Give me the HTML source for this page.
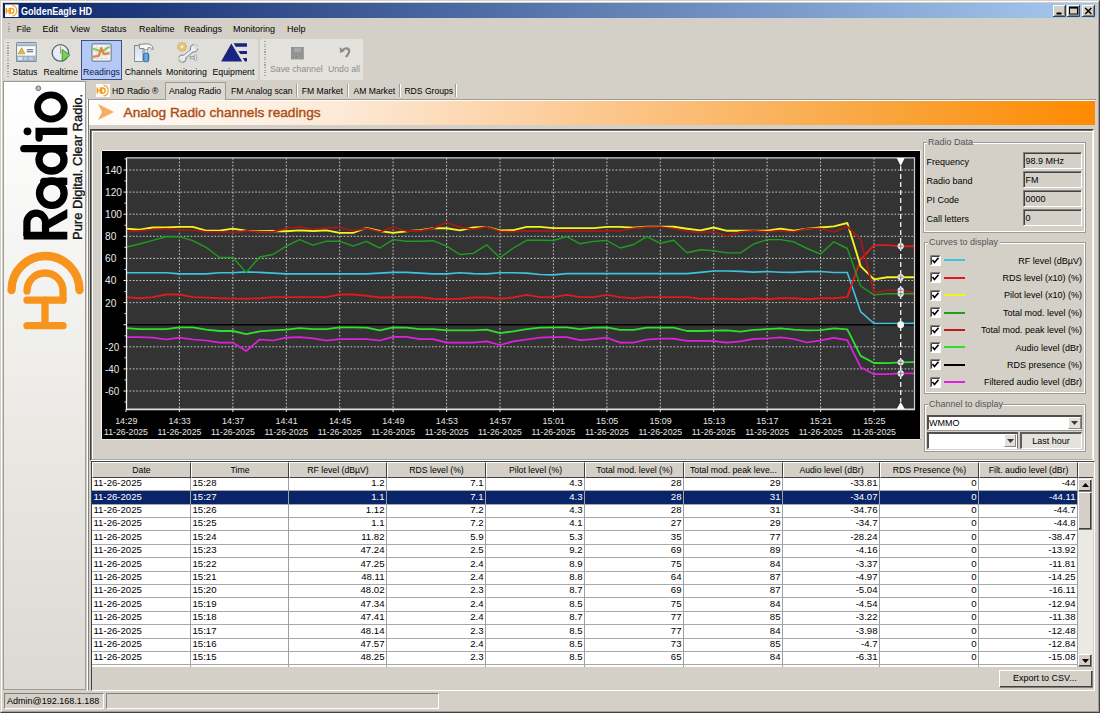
<!DOCTYPE html><html><head><meta charset="utf-8"><style>
*{box-sizing:border-box;margin:0;padding:0}
html,body{width:1100px;height:713px;overflow:hidden}
body{position:relative;background:#d4d0c8;font-family:"Liberation Sans",sans-serif;font-size:9px;color:#000}
.a{position:absolute}
.t{position:absolute;white-space:nowrap;line-height:1}
.raised{border-style:solid;border-width:1px;border-color:#fff #808080 #808080 #fff}
.sunk{border-style:solid;border-width:1px;border-color:#808080 #fff #fff #808080}
.grp{position:absolute;border:1px solid #fff;box-shadow:inset 1px 1px 0 #9c9a94, -1px -1px 0 #9c9a94}
.cell{position:absolute;white-space:nowrap;overflow:hidden;line-height:13px;height:13px}
</style></head><body>
<div class="a" style="left:0;top:0;width:1100px;height:713px;border-style:solid;border-width:1px;border-color:#d4d0c8 #404040 #404040 #d4d0c8"></div>
<div class="a" style="left:1px;top:1px;width:1098px;height:711px;border-style:solid;border-width:1px;border-color:#fff #a4a19a #a4a19a #fff"></div>
<div class="a" style="left:3px;top:3px;width:1094px;height:15px;background:linear-gradient(90deg,#0a246a 0%,#a6caf0 100%)"></div>
<svg class="a" style="left:5px;top:4px" width="13.5" height="13.5" viewBox="0 0 14 13"><rect width="14" height="13" fill="#fdfcfa"/><path d="M1.3,3.6 V9.6 M4.5,3.6 V9.6 M1.3,6.6 H4.5" stroke="#f29c1e" stroke-width="1.5" fill="none"/><path d="M5.6,3.3 V9.9 M5.6,4 H6.6 A2.6,2.6 0 0 1 6.6,9.2 H5.6" stroke="#f29c1e" stroke-width="1.4" fill="none"/><path d="M7.4,1.1 A5.5,5.5 0 0 1 7.4,12" stroke="#f4a62e" stroke-width="1.2" fill="none"/></svg>
<div class="t" style="left:20.5px;top:6.6px;font-size:10.2px;color:#fff;font-weight:bold;transform:scaleX(0.89);transform-origin:0 0">GoldenEagle HD</div>
<svg class="a" style="left:1053px;top:5px" width="13" height="12" viewBox="0 0 13 12"><rect x="0" y="0" width="13" height="12" fill="#d4d0c8"/><path d="M0.5,11.5 V0.5 H12.5" stroke="#fff" fill="none"/><path d="M0,11.5 H12.5 V0" stroke="#404040" fill="none"/><path d="M1.5,10.5 H11.5 V1" stroke="#808080" fill="none"/><rect x="3.5" y="7.5" width="5" height="2" fill="#000"/></svg>
<svg class="a" style="left:1067px;top:5px" width="13" height="12" viewBox="0 0 13 12"><rect x="0" y="0" width="13" height="12" fill="#d4d0c8"/><path d="M0.5,11.5 V0.5 H12.5" stroke="#fff" fill="none"/><path d="M0,11.5 H12.5 V0" stroke="#404040" fill="none"/><path d="M1.5,10.5 H11.5 V1" stroke="#808080" fill="none"/><rect x="2.5" y="2" width="8" height="7" fill="none" stroke="#000" stroke-width="1"/><rect x="2.5" y="2" width="8" height="1.6" fill="#000"/></svg>
<svg class="a" style="left:1082px;top:5px" width="13" height="12" viewBox="0 0 13 12"><rect x="0" y="0" width="13" height="12" fill="#d4d0c8"/><path d="M0.5,11.5 V0.5 H12.5" stroke="#fff" fill="none"/><path d="M0,11.5 H12.5 V0" stroke="#404040" fill="none"/><path d="M1.5,10.5 H11.5 V1" stroke="#808080" fill="none"/><path d="M3.3,3 L9.3,9 M9.3,3 L3.3,9" stroke="#000" stroke-width="1.5"/></svg>
<div class="a" style="left:8px;top:23px;width:2px;height:10px;background:repeating-linear-gradient(180deg,#a8a49c 0 1.3px,transparent 1.3px 2.6px)"></div>
<div class="t" style="left:16.5px;top:25.3px;font-size:9px;color:#000;">File</div>
<div class="t" style="left:42.5px;top:25.3px;font-size:9px;color:#000;">Edit</div>
<div class="t" style="left:70.5px;top:25.3px;font-size:9px;color:#000;">View</div>
<div class="t" style="left:101px;top:25.3px;font-size:9px;color:#000;">Status</div>
<div class="t" style="left:139px;top:25.3px;font-size:9px;color:#000;">Realtime</div>
<div class="t" style="left:184px;top:25.3px;font-size:9px;color:#000;">Readings</div>
<div class="t" style="left:233px;top:25.3px;font-size:9px;color:#000;">Monitoring</div>
<div class="t" style="left:287px;top:25.3px;font-size:9px;color:#000;">Help</div>
<div class="a" style="left:4px;top:39px;width:254px;height:41px;background:#e0ded8;border-radius:2px"></div>
<div class="a" style="left:260px;top:39px;width:103px;height:41px;background:#e4e2dc;border-radius:2px"></div>
<div class="a" style="left:7px;top:42px;width:2px;height:35px;background:repeating-linear-gradient(180deg,#a8a49c 0 1.3px,transparent 1.3px 2.6px)"></div>
<div class="a" style="left:264px;top:41px;width:2px;height:36px;background:repeating-linear-gradient(180deg,#a8a49c 0 1.3px,transparent 1.3px 2.6px)"></div>
<div class="a" style="left:81px;top:40px;width:41px;height:40px;background:#b6c8f4;border:1px solid #3d4f8f"></div>
<svg class="a" style="left:15.5px;top:42px" width="21" height="20" viewBox="0 0 21 20"><defs><linearGradient id="sb" x1="0" y1="0" x2="0" y2="1"><stop offset="0" stop-color="#c2d0de"/><stop offset="1" stop-color="#94a8bc"/></linearGradient></defs><rect x="0.6" y="0.6" width="19.6" height="19" rx="1" fill="#fbfcfd" stroke="#7d8c9c" stroke-width="1.1"/><rect x="1.1" y="1.1" width="18.6" height="3.1" fill="url(#sb)"/><rect x="1.1" y="13.6" width="18.6" height="5.5" fill="#9fb2c6"/><rect x="2" y="15" width="4.5" height="3" fill="#d8e6f4"/><rect x="8" y="15.5" width="3" height="2" fill="#c8d8e8"/><rect x="13" y="15.5" width="4" height="2" fill="#c8d8e8"/><path d="M5.6,5.8 L9,11.8 H2.2 Z" fill="#dcbc4c" stroke="#c8a030" stroke-width="0.9" stroke-linejoin="round"/><rect x="10.8" y="7.1" width="6.3" height="1.2" fill="#6c747c"/><rect x="10.8" y="9.1" width="6.3" height="1.2" fill="#6c747c"/></svg>
<svg class="a" style="left:51px;top:44px" width="20" height="19" viewBox="0 0 20 19"><circle cx="9.4" cy="8.9" r="8.2" fill="#e2eef8" stroke="#5a6670" stroke-width="1.3"/><path d="M9.1,2.4 L9.9,2.4 L10,9.5 L9,9.5 Z" fill="#d07a38"/><path d="M11.2,5.4 L18.9,11.3 L11.2,17.5 Z" fill="#7cd05a" stroke="#3a8a2a" stroke-width="0.9" stroke-linejoin="round"/></svg>
<svg class="a" style="left:91px;top:43px" width="21" height="19" viewBox="0 0 21 19"><rect x="0.9" y="0.8" width="19.4" height="17.4" rx="2" fill="#f2f4f6" stroke="#8494ac" stroke-width="1.5"/><path d="M2,5 H19 M2,8.5 H19 M2,12 H19 M2,15.5 H19 M6,2 V17 M10.5,2 V17 M15,2 V17" stroke="#cdd6e2" stroke-width="0.6"/><path d="M1.7,5.8 L11.2,8.4 L18.6,3.6" stroke="#8cc45a" stroke-width="2" fill="none" stroke-linejoin="round"/><path d="M1.7,13.8 L7.8,12.8 L10.2,5.1 L12.8,11.1 L18.6,10.1" stroke="#e0883a" stroke-width="2.3" fill="none" stroke-linejoin="round"/></svg>
<svg class="a" style="left:133px;top:43px" width="22" height="20" viewBox="0 0 22 20"><defs><linearGradient id="dg" x1="0" y1="0" x2="0" y2="1"><stop offset="0" stop-color="#d2deec"/><stop offset="1" stop-color="#f2f6fb"/></linearGradient><linearGradient id="hg" x1="0" y1="0" x2="1" y2="0"><stop offset="0" stop-color="#3c84c4"/><stop offset="0.5" stop-color="#7ab4e4"/><stop offset="1" stop-color="#3a7ab8"/></linearGradient></defs><rect x="1.6" y="2.5" width="8.4" height="16" fill="url(#dg)" stroke="#77828e" stroke-width="0.9"/><path d="M6.2,1.4 L13.5,0.9 C17.5,0.9 20,2.8 20.2,6.3 L18.8,6.6 C18,4.8 16.8,4.2 15.2,4.6 L14.6,7 L11.4,7 L10.8,5.4 L6.6,5.6 Z" fill="#f6f8fa" stroke="#707a84" stroke-width="0.9" stroke-linejoin="round"/><rect x="11.4" y="6.8" width="3.2" height="3.6" fill="#e0e4e8" stroke="#8a949c" stroke-width="0.6"/><rect x="10.4" y="10.1" width="5.4" height="8.7" rx="1.8" fill="url(#hg)" stroke="#2a6898" stroke-width="0.8"/></svg>
<svg class="a" style="left:175px;top:41px" width="24" height="22" viewBox="0 0 24 22"><circle cx="7" cy="5.8" r="4.3" fill="#e2c27a" stroke="#d6b062" stroke-width="1.2" stroke-dasharray="1.8 0.9"/><circle cx="7" cy="5.8" r="3.2" fill="#e4c47c"/><circle cx="7" cy="5.8" r="1.4" fill="#fbf0d8"/><path d="M8.2,16.8 L18.3,8.6" stroke="#8a9298" stroke-width="4.2" stroke-linecap="round"/><circle cx="19" cy="7.4" r="3.6" fill="#eef0f2" stroke="#7a8288" stroke-width="1.1"/><circle cx="7.4" cy="17.6" r="3.6" fill="#eef0f2" stroke="#7a8288" stroke-width="1.1"/><path d="M8.2,16.8 L18.3,8.6" stroke="#eef0f2" stroke-width="2.4" stroke-linecap="round"/><path d="M19.2,2.4 L24,6.8 L20.6,8.8 L18.4,6.8 Z" fill="#e2e0da"/><path d="M2.4,17 L6.8,21.8 L8.2,18.2 L6.2,16.4 Z" fill="#e2e0da"/><rect x="15.2" y="15.4" width="4.4" height="2.4" fill="#dfe2e5" stroke="#8a9298" stroke-width="0.8"/><rect x="19.4" y="14.2" width="2.2" height="5.2" rx="1" fill="#eef0f2" stroke="#8a9298" stroke-width="0.8"/></svg>
<svg class="a" style="left:220px;top:43px" width="28" height="20" viewBox="0 0 28 20"><path d="M1.1,18.4 L11.3,0.4 L22.2,18.4 Z" fill="#1a2282"/><path d="M13.6,0.2 H27 V3.7 H15.7 Z" fill="#1a2282"/><path d="M18.4,7.9 H27 V10.9 H20.3 Z" fill="#1a2282"/><path d="M22.8,15 H27 V18.5 H24.9 Z" fill="#1a2282"/></svg>
<svg class="a" style="left:291px;top:46.5px" width="13" height="13" viewBox="0 0 13 13"><rect x="0" y="0" width="12.8" height="12.4" fill="#919191"/><rect x="3" y="0.6" width="7" height="4.6" fill="#a6a6a6"/><rect x="3.6" y="7.6" width="5.6" height="4.4" fill="#9a9a9a"/><rect x="4.6" y="8.6" width="2" height="2.4" fill="#868686"/></svg>
<svg class="a" style="left:338.5px;top:46px" width="12" height="12" viewBox="0 0 12 12"><path d="M3.6,4.4 C5.2,1.6 10.2,1.6 10.2,5.2 C10.2,7.6 8.4,8.6 7,11" stroke="#8c8c8c" stroke-width="2.3" fill="none"/><path d="M0.6,1.2 L1,7 L6,5 Z" fill="#8c8c8c"/></svg>
<div class="t" style="left:12.6px;top:67.7px;font-size:8.75px;color:#000;">Status</div>
<div class="t" style="left:43.5px;top:67.7px;font-size:8.75px;color:#000;">Realtime</div>
<div class="t" style="left:83px;top:67.7px;font-size:8.75px;color:#0a1850;">Readings</div>
<div class="t" style="left:124.8px;top:67.7px;font-size:8.75px;color:#000;">Channels</div>
<div class="t" style="left:166px;top:67.7px;font-size:8.75px;color:#000;">Monitoring</div>
<div class="t" style="left:212.5px;top:67.7px;font-size:8.75px;color:#000;">Equipment</div>
<div class="t" style="left:270px;top:64.7px;font-size:8.7px;color:#8c8c8c;">Save channel</div>
<div class="t" style="left:328px;top:64.7px;font-size:8.7px;color:#8c8c8c;">Undo all</div>
<div class="a" style="left:3px;top:81px;width:83px;height:609px;border:1px solid #a09c94;background:linear-gradient(180deg,#ffffff 0%,#f4f4f2 30%,#e6e4de 70%,#dcd9d2 100%)"></div>
<svg class="a" style="left:4px;top:82px" width="81" height="265" viewBox="4 82 81 265">
<g transform="matrix(0 -1 -1 0 67.3 240)" fill="none" stroke="#000">
<path d="M0.4,0 H8.3 V43.7 H0.4 Z" fill="#000" stroke="none"/>
<path d="M4,40.4 H17.5 A9.3,9.3 0 0 0 17.5,21.8 H4" stroke-width="7.2"/>
<path d="M11.5,18.6 H20.5 L31,0 H22 Z" fill="#000" stroke="none"/>
<ellipse cx="46.8" cy="15.5" rx="12.2" ry="12.3" stroke-width="7.3"/>
<path d="M58.7,4 V23.5" stroke-width="7.3" stroke-linecap="round"/>
<path d="M58.7,0 V8" stroke-width="7.3"/>
<ellipse cx="80.2" cy="15.8" rx="11.2" ry="12.5" stroke-width="7.3"/>
<path d="M91.4,4 V43.5" stroke-width="7.3" stroke-linecap="round"/>
<path d="M91.4,0 V8" stroke-width="7.3"/>
<path d="M108.7,4 V28.2 H102" stroke-width="7.3" stroke-linecap="round" stroke-linejoin="miter"/>
<path d="M108.7,0 V8" stroke-width="7.3"/>
<circle cx="108.7" cy="39.8" r="3.9" fill="#000" stroke="none"/>
<ellipse cx="133" cy="16.4" rx="12.1" ry="13.3" stroke-width="6.8"/>
</g>
<text transform="translate(82,240) rotate(-90)" font-family="Liberation Sans" font-size="13.3" fill="#111" stroke="#111" stroke-width="0.35" textLength="146" lengthAdjust="spacingAndGlyphs">Pure Digital. Clear Radio.</text>
<circle cx="38.3" cy="88.3" r="2.4" fill="#bbb" stroke="#666" stroke-width="0.9"/>
<path d="M11.5,290 A34,34 0 0 1 79.5,290" stroke="#f7941d" stroke-width="8.3" fill="none" stroke-linecap="round"/>
<path d="M27,291 A18,18 0 0 1 63,291 V300" stroke="#f7941d" stroke-width="7.3" fill="none" stroke-linecap="round"/>
<path d="M27,300.2 H63 M45,300 V325 M27,325.7 H63" stroke="#f7941d" stroke-width="7.3" fill="none" stroke-linecap="round"/>
</svg>
<div class="a" style="left:87px;top:81px;width:1010px;height:18px;background:#d4d0c8"></div>
<svg class="a" style="left:96px;top:84px" width="14" height="13" viewBox="0 0 14 13"><rect width="14" height="13" fill="#fdfcfa"/><path d="M1.3,3.6 V9.6 M4.5,3.6 V9.6 M1.3,6.6 H4.5" stroke="#f29c1e" stroke-width="1.5" fill="none"/><path d="M5.6,3.3 V9.9 M5.6,4 H6.6 A2.6,2.6 0 0 1 6.6,9.2 H5.6" stroke="#f29c1e" stroke-width="1.4" fill="none"/><path d="M7.4,1.1 A5.5,5.5 0 0 1 7.4,12" stroke="#f4a62e" stroke-width="1.2" fill="none"/></svg>
<div class="t" style="left:112px;top:87.2px;font-size:8.7px;color:#000;">HD Radio &#174;</div>
<div class="a" style="left:88px;top:99px;width:1008px;height:1px;background:#a09c94"></div>
<div class="a" style="left:165px;top:82px;width:61px;height:19px;background:#dcd9d2;border:1px solid #a09c94;border-bottom:none"></div>
<div class="t" style="left:169px;top:87.2px;font-size:8.7px;color:#000;">Analog Radio</div>
<div class="t" style="left:231px;top:87.2px;font-size:8.6px;color:#000;">FM Analog scan</div>
<div class="t" style="left:301.8px;top:87.2px;font-size:8.6px;color:#000;">FM Market</div>
<div class="t" style="left:353.5px;top:87.2px;font-size:8.6px;color:#000;">AM Market</div>
<div class="t" style="left:404.4px;top:87.2px;font-size:8.6px;color:#000;">RDS Groups</div>
<div class="a" style="left:296px;top:84px;width:2px;height:13px;border-left:1px solid #a09c94;border-right:1px solid #fff"></div>
<div class="a" style="left:347px;top:84px;width:2px;height:13px;border-left:1px solid #a09c94;border-right:1px solid #fff"></div>
<div class="a" style="left:399px;top:84px;width:2px;height:13px;border-left:1px solid #a09c94;border-right:1px solid #fff"></div>
<div class="a" style="left:455px;top:84px;width:2px;height:13px;border-left:1px solid #a09c94;border-right:1px solid #fff"></div>
<div class="a" style="left:87px;top:99px;width:1px;height:592px;background:#fff"></div>
<div class="a" style="left:88px;top:99px;width:1px;height:591px;background:#808080"></div>
<div class="a" style="left:89px;top:100px;width:1006px;height:25px;border-top:1px solid #fff;border-left:1px solid #fff;background:linear-gradient(90deg,#fffdfa 0%,#fde9d6 25%,#fcc890 50%,#f9a43a 80%,#ff8a00 100%)"></div>
<svg class="a" style="left:97px;top:103px" width="18" height="18" viewBox="0 0 18 18"><path d="M1,1 L17,9 L1,17 L5,9 Z" fill="#f7ae62"/></svg>
<div class="t" style="left:123.5px;top:105.5px;font-size:13.7px;color:#a94f16;-webkit-text-stroke:0.4px #a94f16">Analog Radio channels readings</div>
<div class="a" style="left:90px;top:129px;width:1004px;height:332px;border-style:solid;border-width:1px;border-color:#404040 #fff #fff #404040"></div>
<div class="a" style="left:91px;top:130px;width:1002px;height:330px;border-style:solid;border-width:1px;border-color:#6a6a6a #f4f4f4 #a8a8a8 #808080;box-shadow:inset 1px 1px 0 #fff"></div>
<svg style="position:absolute;left:101px;top:150px" width="820" height="290" viewBox="101 150 820 290">
<rect x="101" y="150" width="820" height="290" fill="#000"/>
<path d="M101.5,440 V150.5 H921" stroke="#f4f4f4" stroke-width="1" fill="none"/>
<path d="M101,439.5 H920.5 V150" stroke="#e8e6e2" stroke-width="1" fill="none"/>
<rect x="126" y="157.5" width="788.5" height="251.5" fill="#333333"/>
<path d="M126,391.0 H914 M126,368.9 H914 M126,346.8 H914 M126,302.6 H914 M126,280.5 H914 M126,258.4 H914 M126,236.3 H914 M126,214.2 H914 M126,192.1 H914 M126,170.0 H914 M179.4,158 V409 M232.9,158 V409 M286.3,158 V409 M339.7,158 V409 M393.1,158 V409 M446.6,158 V409 M500.0,158 V409 M553.4,158 V409 M606.9,158 V409 M660.3,158 V409 M713.7,158 V409 M767.1,158 V409 M820.6,158 V409 M874.0,158 V409" stroke="#c4c4c4" stroke-width="1" stroke-dasharray="1.7 1.7" fill="none"/>
<path d="M126,324.7 H914" stroke="#000" stroke-width="1.5"/>
<path d="M126.0,272.8 L139.4,272.8 L152.7,272.8 L166.1,272.8 L179.4,273.9 L192.8,273.9 L206.1,273.9 L219.5,272.8 L232.9,272.8 L246.2,271.9 L259.6,272.4 L272.9,273.1 L286.3,273.9 L299.6,273.9 L313.0,273.9 L326.4,273.9 L339.7,273.9 L353.1,273.9 L366.4,273.9 L379.8,273.1 L393.1,272.4 L406.5,272.4 L419.9,273.1 L433.2,273.9 L446.6,273.9 L459.9,272.8 L473.3,273.6 L486.6,273.9 L500.0,272.8 L513.4,272.8 L526.7,273.1 L540.1,274.5 L553.4,274.9 L566.8,273.6 L580.1,273.6 L593.5,273.6 L606.9,273.6 L620.2,273.6 L633.6,273.6 L646.9,273.6 L660.3,273.6 L673.6,273.6 L687.0,273.6 L700.4,272.4 L713.7,271.0 L727.1,271.0 L740.4,271.4 L753.8,272.1 L767.1,271.5 L780.5,272.3 L793.8,272.4 L807.2,271.6 L820.6,271.5 L833.9,272.5 L847.3,272.5 L860.6,311.6 L874.0,323.5 L887.3,323.5 L900.7,323.5 L914.1,323.4" stroke="#3ec3e3" stroke-width="1.6" fill="none" stroke-linejoin="round"/>
<path d="M126.0,297.1 L139.4,298.2 L152.7,297.1 L166.1,294.5 L179.4,294.5 L192.8,297.1 L206.1,297.6 L219.5,298.2 L232.9,298.6 L246.2,298.8 L259.6,298.2 L272.9,297.1 L286.3,297.1 L299.6,297.1 L313.0,297.1 L326.4,297.1 L339.7,294.5 L353.1,294.5 L366.4,295.7 L379.8,297.5 L393.1,297.3 L406.5,297.3 L419.9,297.3 L433.2,298.7 L446.6,299.1 L459.9,298.8 L473.3,297.5 L486.6,297.5 L500.0,298.8 L513.4,297.5 L526.7,294.9 L540.1,297.1 L553.4,297.1 L566.8,294.9 L580.1,297.1 L593.5,297.1 L606.9,294.9 L620.2,297.1 L633.6,298.2 L646.9,297.1 L660.3,297.1 L673.6,297.1 L687.0,297.1 L700.4,298.7 L713.7,298.7 L727.1,298.7 L740.4,299.3 L753.8,298.2 L767.1,299.3 L780.5,298.2 L793.8,298.2 L807.2,299.3 L820.6,298.2 L833.9,298.2 L847.3,297.1 L860.6,259.5 L874.0,245.1 L887.3,245.1 L900.7,246.2 L914.1,246.2" stroke="#e01b1b" stroke-width="1.9" fill="none" stroke-linejoin="round"/>
<path d="M126.0,228.6 L139.4,229.7 L152.7,227.5 L166.1,227.5 L179.4,226.9 L192.8,226.9 L206.1,230.6 L219.5,230.6 L232.9,228.6 L246.2,230.8 L259.6,231.3 L272.9,231.0 L286.3,231.3 L299.6,230.4 L313.0,231.0 L326.4,230.4 L339.7,232.9 L353.1,232.9 L366.4,227.8 L379.8,231.0 L393.1,232.9 L406.5,231.3 L419.9,230.1 L433.2,228.3 L446.6,228.3 L459.9,230.4 L473.3,227.5 L486.6,226.9 L500.0,230.4 L513.4,230.1 L526.7,226.9 L540.1,226.9 L553.4,228.1 L566.8,228.1 L580.1,228.1 L593.5,228.1 L606.9,226.9 L620.2,226.9 L633.6,227.8 L646.9,226.7 L660.3,226.7 L673.6,226.7 L687.0,228.7 L700.4,230.4 L713.7,227.5 L727.1,230.8 L740.4,230.8 L753.8,230.8 L767.1,230.8 L780.5,228.6 L793.8,230.8 L807.2,228.6 L820.6,227.5 L833.9,226.4 L847.3,223.0 L860.6,266.1 L874.0,279.4 L887.3,277.2 L900.7,277.2 L914.1,277.2" stroke="#f4f41e" stroke-width="1.9" fill="none" stroke-linejoin="round"/>
<path d="M126.0,231.9 L139.4,230.8 L152.7,229.7 L166.1,229.0 L179.4,230.1 L192.8,230.1 L206.1,231.9 L219.5,231.9 L232.9,232.5 L246.2,231.0 L259.6,231.9 L272.9,231.9 L286.3,228.3 L299.6,226.9 L313.0,229.4 L326.4,227.7 L339.7,227.5 L353.1,230.8 L366.4,228.3 L379.8,231.9 L393.1,227.1 L406.5,231.0 L419.9,231.0 L433.2,228.3 L446.6,222.5 L459.9,227.1 L473.3,229.4 L486.6,226.9 L500.0,231.3 L513.4,231.9 L526.7,231.0 L540.1,231.0 L553.4,231.0 L566.8,231.0 L580.1,231.0 L593.5,231.0 L606.9,230.8 L620.2,230.8 L633.6,228.3 L646.9,227.1 L660.3,227.1 L673.6,228.7 L687.0,231.3 L700.4,232.5 L713.7,231.9 L727.1,236.1 L740.4,231.9 L753.8,230.8 L767.1,231.9 L780.5,230.8 L793.8,231.9 L807.2,228.6 L820.6,228.6 L833.9,231.9 L847.3,226.4 L860.6,239.6 L874.0,292.7 L887.3,290.4 L900.7,290.4 L914.1,292.7" stroke="#a3191b" stroke-width="1.8" fill="none" stroke-linejoin="round"/>
<path d="M126.0,247.3 L139.4,244.0 L152.7,240.3 L166.1,236.7 L179.4,236.7 L192.8,240.7 L206.1,247.3 L219.5,257.5 L232.9,257.5 L246.2,272.4 L259.6,257.0 L272.9,254.5 L286.3,246.2 L299.6,239.6 L313.0,245.1 L326.4,241.2 L339.7,241.2 L353.1,246.2 L366.4,241.4 L379.8,248.0 L393.1,239.6 L406.5,241.2 L419.9,241.2 L433.2,240.7 L446.6,246.2 L459.9,254.5 L473.3,253.4 L486.6,244.8 L500.0,257.8 L513.4,248.0 L526.7,240.3 L540.1,240.3 L553.4,240.5 L566.8,236.6 L580.1,243.8 L593.5,241.4 L606.9,240.5 L620.2,248.0 L633.6,244.5 L646.9,236.6 L660.3,243.3 L673.6,240.3 L687.0,252.8 L700.4,249.8 L713.7,250.8 L727.1,252.9 L740.4,252.9 L753.8,244.0 L767.1,239.6 L780.5,239.6 L793.8,241.8 L807.2,248.5 L820.6,254.0 L833.9,241.8 L847.3,248.5 L860.6,286.0 L874.0,294.9 L887.3,293.8 L900.7,293.8 L914.1,293.8" stroke="#1e9e1e" stroke-width="1.4" fill="none" stroke-linejoin="round"/>
<path d="M126.0,328.1 L139.4,329.2 L152.7,329.2 L166.1,329.2 L179.4,327.4 L192.8,327.4 L206.1,329.6 L219.5,331.0 L232.9,331.0 L246.2,334.1 L259.6,331.3 L272.9,330.4 L286.3,329.6 L299.6,328.1 L313.0,329.2 L326.4,329.2 L339.7,327.4 L353.1,327.4 L366.4,327.7 L379.8,330.4 L393.1,327.4 L406.5,327.7 L419.9,329.2 L433.2,329.2 L446.6,330.4 L459.9,330.4 L473.3,330.4 L486.6,329.6 L500.0,333.2 L513.4,331.3 L526.7,329.2 L540.1,327.7 L553.4,327.4 L566.8,327.4 L580.1,329.2 L593.5,327.7 L606.9,327.4 L620.2,329.9 L633.6,329.9 L646.9,327.7 L660.3,327.7 L673.6,327.7 L687.0,331.0 L700.4,331.0 L713.7,330.7 L727.1,330.4 L740.4,331.7 L753.8,329.9 L767.1,329.1 L780.5,328.3 L793.8,329.7 L807.2,330.3 L820.6,330.2 L833.9,328.4 L847.3,329.3 L860.6,355.9 L874.0,363.0 L887.3,363.1 L900.7,362.3 L914.1,362.1" stroke="#2ee02e" stroke-width="1.8" fill="none" stroke-linejoin="round"/>
<path d="M126.0,337.2 L139.4,337.2 L152.7,337.7 L166.1,339.5 L179.4,337.7 L192.8,339.5 L206.1,340.5 L219.5,342.6 L232.9,342.6 L246.2,351.0 L259.6,339.5 L272.9,340.5 L286.3,337.7 L299.6,337.2 L313.0,338.3 L326.4,340.5 L339.7,339.1 L353.1,339.1 L366.4,339.1 L379.8,340.5 L393.1,336.9 L406.5,336.9 L419.9,339.1 L433.2,339.1 L446.6,342.6 L459.9,342.6 L473.3,342.6 L486.6,341.4 L500.0,345.0 L513.4,341.4 L526.7,339.5 L540.1,337.7 L553.4,337.2 L566.8,337.2 L580.1,340.1 L593.5,339.1 L606.9,337.7 L620.2,342.6 L633.6,342.6 L646.9,339.5 L660.3,338.6 L673.6,338.6 L687.0,340.8 L700.4,340.8 L713.7,341.2 L727.1,342.6 L740.4,341.4 L753.8,338.9 L767.1,338.5 L780.5,337.3 L793.8,339.0 L807.2,342.5 L820.6,340.4 L833.9,337.8 L847.3,340.1 L860.6,367.2 L874.0,374.2 L887.3,374.1 L900.7,373.4 L914.1,373.3" stroke="#e020e0" stroke-width="1.7" fill="none" stroke-linejoin="round"/>
<path d="M126.5,158 V409" stroke="#f0f0f0" stroke-width="1.3"/>
<path d="M914.5,409 V157.8 H126" stroke="#cfcfcf" stroke-width="1.2" fill="none"/>
<path d="M126,409.3 H915" stroke="#dedede" stroke-width="1.8" fill="none"/>
<path d="M124.5,402.0 H126 M123.5,391.0 H126 M124.5,379.9 H126 M123.5,368.9 H126 M124.5,357.8 H126 M123.5,346.8 H126 M124.5,335.8 H126 M123.5,324.7 H126 M124.5,313.6 H126 M123.5,302.6 H126 M124.5,291.6 H126 M123.5,280.5 H126 M124.5,269.4 H126 M123.5,258.4 H126 M124.5,247.3 H126 M123.5,236.3 H126 M124.5,225.2 H126 M123.5,214.2 H126 M124.5,203.1 H126 M123.5,192.1 H126 M124.5,181.0 H126 M123.5,170.0 H126 M124.5,158.9 H126 M126.0,409 V412 M179.4,409 V412 M232.9,409 V412 M286.3,409 V412 M339.7,409 V412 M393.1,409 V412 M446.6,409 V412 M500.0,409 V412 M553.4,409 V412 M606.9,409 V412 M660.3,409 V412 M713.7,409 V412 M767.1,409 V412 M820.6,409 V412 M874.0,409 V412" stroke="#e8e8e8" stroke-width="1"/>
<text x="105" y="394.9" fill="#e8e8e8" font-size="10.8" textLength="14.3" lengthAdjust="spacingAndGlyphs" font-family="Liberation Sans">-60</text>
<text x="105" y="372.8" fill="#e8e8e8" font-size="10.8" textLength="14.3" lengthAdjust="spacingAndGlyphs" font-family="Liberation Sans">-40</text>
<text x="105" y="350.7" fill="#e8e8e8" font-size="10.8" textLength="14.3" lengthAdjust="spacingAndGlyphs" font-family="Liberation Sans">-20</text>
<text x="105" y="306.5" fill="#e8e8e8" font-size="10.8" textLength="11.3" lengthAdjust="spacingAndGlyphs" font-family="Liberation Sans">20</text>
<text x="105" y="284.4" fill="#e8e8e8" font-size="10.8" textLength="11.3" lengthAdjust="spacingAndGlyphs" font-family="Liberation Sans">40</text>
<text x="105" y="262.3" fill="#e8e8e8" font-size="10.8" textLength="11.3" lengthAdjust="spacingAndGlyphs" font-family="Liberation Sans">60</text>
<text x="105" y="240.2" fill="#e8e8e8" font-size="10.8" textLength="11.3" lengthAdjust="spacingAndGlyphs" font-family="Liberation Sans">80</text>
<text x="105" y="218.1" fill="#e8e8e8" font-size="10.8" textLength="17.0" lengthAdjust="spacingAndGlyphs" font-family="Liberation Sans">100</text>
<text x="105" y="196.0" fill="#e8e8e8" font-size="10.8" textLength="17.0" lengthAdjust="spacingAndGlyphs" font-family="Liberation Sans">120</text>
<text x="105" y="173.9" fill="#e8e8e8" font-size="10.8" textLength="17.0" lengthAdjust="spacingAndGlyphs" font-family="Liberation Sans">140</text>
<text x="126.3" y="424.2" fill="#e6e6e6" font-size="8.9" text-anchor="middle" font-family="Liberation Sans">14:29</text>
<text x="126.0" y="435.4" fill="#e6e6e6" font-size="8.7" text-anchor="middle" font-family="Liberation Sans">11-26-2025</text>
<text x="179.7" y="424.2" fill="#e6e6e6" font-size="8.9" text-anchor="middle" font-family="Liberation Sans">14:33</text>
<text x="179.4" y="435.4" fill="#e6e6e6" font-size="8.7" text-anchor="middle" font-family="Liberation Sans">11-26-2025</text>
<text x="233.2" y="424.2" fill="#e6e6e6" font-size="8.9" text-anchor="middle" font-family="Liberation Sans">14:37</text>
<text x="232.9" y="435.4" fill="#e6e6e6" font-size="8.7" text-anchor="middle" font-family="Liberation Sans">11-26-2025</text>
<text x="286.6" y="424.2" fill="#e6e6e6" font-size="8.9" text-anchor="middle" font-family="Liberation Sans">14:41</text>
<text x="286.3" y="435.4" fill="#e6e6e6" font-size="8.7" text-anchor="middle" font-family="Liberation Sans">11-26-2025</text>
<text x="340.0" y="424.2" fill="#e6e6e6" font-size="8.9" text-anchor="middle" font-family="Liberation Sans">14:45</text>
<text x="339.7" y="435.4" fill="#e6e6e6" font-size="8.7" text-anchor="middle" font-family="Liberation Sans">11-26-2025</text>
<text x="393.4" y="424.2" fill="#e6e6e6" font-size="8.9" text-anchor="middle" font-family="Liberation Sans">14:49</text>
<text x="393.1" y="435.4" fill="#e6e6e6" font-size="8.7" text-anchor="middle" font-family="Liberation Sans">11-26-2025</text>
<text x="446.9" y="424.2" fill="#e6e6e6" font-size="8.9" text-anchor="middle" font-family="Liberation Sans">14:53</text>
<text x="446.6" y="435.4" fill="#e6e6e6" font-size="8.7" text-anchor="middle" font-family="Liberation Sans">11-26-2025</text>
<text x="500.3" y="424.2" fill="#e6e6e6" font-size="8.9" text-anchor="middle" font-family="Liberation Sans">14:57</text>
<text x="500.0" y="435.4" fill="#e6e6e6" font-size="8.7" text-anchor="middle" font-family="Liberation Sans">11-26-2025</text>
<text x="553.7" y="424.2" fill="#e6e6e6" font-size="8.9" text-anchor="middle" font-family="Liberation Sans">15:01</text>
<text x="553.4" y="435.4" fill="#e6e6e6" font-size="8.7" text-anchor="middle" font-family="Liberation Sans">11-26-2025</text>
<text x="607.2" y="424.2" fill="#e6e6e6" font-size="8.9" text-anchor="middle" font-family="Liberation Sans">15:05</text>
<text x="606.9" y="435.4" fill="#e6e6e6" font-size="8.7" text-anchor="middle" font-family="Liberation Sans">11-26-2025</text>
<text x="660.6" y="424.2" fill="#e6e6e6" font-size="8.9" text-anchor="middle" font-family="Liberation Sans">15:09</text>
<text x="660.3" y="435.4" fill="#e6e6e6" font-size="8.7" text-anchor="middle" font-family="Liberation Sans">11-26-2025</text>
<text x="714.0" y="424.2" fill="#e6e6e6" font-size="8.9" text-anchor="middle" font-family="Liberation Sans">15:13</text>
<text x="713.7" y="435.4" fill="#e6e6e6" font-size="8.7" text-anchor="middle" font-family="Liberation Sans">11-26-2025</text>
<text x="767.4" y="424.2" fill="#e6e6e6" font-size="8.9" text-anchor="middle" font-family="Liberation Sans">15:17</text>
<text x="767.1" y="435.4" fill="#e6e6e6" font-size="8.7" text-anchor="middle" font-family="Liberation Sans">11-26-2025</text>
<text x="820.9" y="424.2" fill="#e6e6e6" font-size="8.9" text-anchor="middle" font-family="Liberation Sans">15:21</text>
<text x="820.6" y="435.4" fill="#e6e6e6" font-size="8.7" text-anchor="middle" font-family="Liberation Sans">11-26-2025</text>
<text x="874.3" y="424.2" fill="#e6e6e6" font-size="8.9" text-anchor="middle" font-family="Liberation Sans">15:25</text>
<text x="874.0" y="435.4" fill="#e6e6e6" font-size="8.7" text-anchor="middle" font-family="Liberation Sans">11-26-2025</text>
<path d="M900.7,166 V402" stroke="#f0f0f0" stroke-width="1.3" stroke-dasharray="5 3"/>
<path d="M896.7,158 h8 l-4,8 z" fill="#fff"/>
<path d="M896.7,409 h8 l-4,-7 z" fill="#fff"/>
<circle cx="900.7" cy="246.2" r="3.1" fill="#ececec"/>
<path d="M898.2,246.2 h5 M900.7,243.7 v5" stroke="#555" stroke-width="0.6"/>
<circle cx="900.7" cy="290.4" r="3.1" fill="#ececec"/>
<path d="M898.2,290.4 h5 M900.7,287.9 v5" stroke="#555" stroke-width="0.6"/>
<circle cx="900.7" cy="277.2" r="3.1" fill="#ececec"/>
<path d="M898.2,277.2 h5 M900.7,274.7 v5" stroke="#555" stroke-width="0.6"/>
<circle cx="900.7" cy="293.8" r="3.1" fill="#ececec"/>
<path d="M898.2,293.8 h5 M900.7,291.3 v5" stroke="#555" stroke-width="0.6"/>
<circle cx="900.7" cy="362.3" r="3.1" fill="#ececec"/>
<path d="M898.2,362.3 h5 M900.7,359.8 v5" stroke="#555" stroke-width="0.6"/>
<circle cx="900.7" cy="373.4" r="3.1" fill="#ececec"/>
<path d="M898.2,373.4 h5 M900.7,370.9 v5" stroke="#555" stroke-width="0.6"/>
<circle cx="900.7" cy="324.7" r="3.4" fill="#f4f4f4"/>
</svg>
<div class="a" style="left:923px;top:142px;width:163px;height:91px;border:1px solid #9c9a94;outline:1px solid #fff;outline-offset:-2px"></div><div class="a" style="left:927px;top:141px;width:46px;height:4px;background:#d4d0c8"></div><div class="t" style="left:928px;top:138px;font-size:9px;color:#555">Radio Data</div>
<div class="t" style="left:926.5px;top:157.5px;font-size:9px">Frequency</div>
<div class="a sunk" style="left:1023px;top:152px;width:59px;height:17px;background:#d4d0c8;box-shadow:inset 1px 1px 0 #404040"></div><div class="t" style="left:1025.5px;top:156.5px;font-size:9px">98.9 MHz</div>
<div class="t" style="left:926.5px;top:176.5px;font-size:9px">Radio band</div>
<div class="a sunk" style="left:1023px;top:171px;width:59px;height:17px;background:#d4d0c8;box-shadow:inset 1px 1px 0 #404040"></div><div class="t" style="left:1025.5px;top:175.5px;font-size:9px">FM</div>
<div class="t" style="left:926.5px;top:195.5px;font-size:9px">PI Code</div>
<div class="a sunk" style="left:1023px;top:190px;width:59px;height:17px;background:#d4d0c8;box-shadow:inset 1px 1px 0 #404040"></div><div class="t" style="left:1025.5px;top:194.5px;font-size:9px">0000</div>
<div class="t" style="left:926.5px;top:214.5px;font-size:9px">Call letters</div>
<div class="a sunk" style="left:1023px;top:209px;width:59px;height:17px;background:#d4d0c8;box-shadow:inset 1px 1px 0 #404040"></div><div class="t" style="left:1025.5px;top:213.5px;font-size:9px">0</div>
<div class="a" style="left:924px;top:242px;width:162px;height:152px;border:1px solid #9c9a94;outline:1px solid #fff;outline-offset:-2px"></div><div class="a" style="left:928px;top:241px;width:72px;height:4px;background:#d4d0c8"></div><div class="t" style="left:929px;top:238px;font-size:9px;color:#555">Curves to display</div>
<svg class="a" style="left:930px;top:255.0px" width="11" height="11" viewBox="0 0 11 11"><rect x="0" y="0" width="11" height="11" fill="#fff"/><path d="M0.5,10.5 V0.5 H10.5" stroke="#808080" fill="none"/><path d="M1.5,9.5 V1.5 H9.5" stroke="#404040" fill="none"/><path d="M0.5,10.5 H10.5 V0.5" stroke="#fff" fill="none"/><path d="M2.5,5 L4.5,7.5 L8.5,2.8" stroke="#000" stroke-width="1.6" fill="none"/></svg>
<div class="a" style="left:944px;top:259.3px;width:21px;height:2px;background:#3ec3e3"></div>
<div class="t" style="left:960px;top:256.5px;width:122px;text-align:right;font-size:9px">RF level (dB&micro;V)</div>
<svg class="a" style="left:930px;top:272.4px" width="11" height="11" viewBox="0 0 11 11"><rect x="0" y="0" width="11" height="11" fill="#fff"/><path d="M0.5,10.5 V0.5 H10.5" stroke="#808080" fill="none"/><path d="M1.5,9.5 V1.5 H9.5" stroke="#404040" fill="none"/><path d="M0.5,10.5 H10.5 V0.5" stroke="#fff" fill="none"/><path d="M2.5,5 L4.5,7.5 L8.5,2.8" stroke="#000" stroke-width="1.6" fill="none"/></svg>
<div class="a" style="left:944px;top:276.7px;width:21px;height:2px;background:#e01b1b"></div>
<div class="t" style="left:960px;top:273.9px;width:122px;text-align:right;font-size:9px">RDS level (x10) (%)</div>
<svg class="a" style="left:930px;top:289.8px" width="11" height="11" viewBox="0 0 11 11"><rect x="0" y="0" width="11" height="11" fill="#fff"/><path d="M0.5,10.5 V0.5 H10.5" stroke="#808080" fill="none"/><path d="M1.5,9.5 V1.5 H9.5" stroke="#404040" fill="none"/><path d="M0.5,10.5 H10.5 V0.5" stroke="#fff" fill="none"/><path d="M2.5,5 L4.5,7.5 L8.5,2.8" stroke="#000" stroke-width="1.6" fill="none"/></svg>
<div class="a" style="left:944px;top:294.1px;width:21px;height:2px;background:#f4f41e"></div>
<div class="t" style="left:960px;top:291.3px;width:122px;text-align:right;font-size:9px">Pilot level (x10) (%)</div>
<svg class="a" style="left:930px;top:307.2px" width="11" height="11" viewBox="0 0 11 11"><rect x="0" y="0" width="11" height="11" fill="#fff"/><path d="M0.5,10.5 V0.5 H10.5" stroke="#808080" fill="none"/><path d="M1.5,9.5 V1.5 H9.5" stroke="#404040" fill="none"/><path d="M0.5,10.5 H10.5 V0.5" stroke="#fff" fill="none"/><path d="M2.5,5 L4.5,7.5 L8.5,2.8" stroke="#000" stroke-width="1.6" fill="none"/></svg>
<div class="a" style="left:944px;top:311.5px;width:21px;height:2px;background:#1e9e1e"></div>
<div class="t" style="left:960px;top:308.7px;width:122px;text-align:right;font-size:9px">Total mod. level (%)</div>
<svg class="a" style="left:930px;top:324.6px" width="11" height="11" viewBox="0 0 11 11"><rect x="0" y="0" width="11" height="11" fill="#fff"/><path d="M0.5,10.5 V0.5 H10.5" stroke="#808080" fill="none"/><path d="M1.5,9.5 V1.5 H9.5" stroke="#404040" fill="none"/><path d="M0.5,10.5 H10.5 V0.5" stroke="#fff" fill="none"/><path d="M2.5,5 L4.5,7.5 L8.5,2.8" stroke="#000" stroke-width="1.6" fill="none"/></svg>
<div class="a" style="left:944px;top:328.9px;width:21px;height:2px;background:#c01b1b"></div>
<div class="t" style="left:960px;top:326.1px;width:122px;text-align:right;font-size:9px">Total mod. peak level (%)</div>
<svg class="a" style="left:930px;top:342.0px" width="11" height="11" viewBox="0 0 11 11"><rect x="0" y="0" width="11" height="11" fill="#fff"/><path d="M0.5,10.5 V0.5 H10.5" stroke="#808080" fill="none"/><path d="M1.5,9.5 V1.5 H9.5" stroke="#404040" fill="none"/><path d="M0.5,10.5 H10.5 V0.5" stroke="#fff" fill="none"/><path d="M2.5,5 L4.5,7.5 L8.5,2.8" stroke="#000" stroke-width="1.6" fill="none"/></svg>
<div class="a" style="left:944px;top:346.3px;width:21px;height:2px;background:#2ee02e"></div>
<div class="t" style="left:960px;top:343.5px;width:122px;text-align:right;font-size:9px">Audio level (dBr)</div>
<svg class="a" style="left:930px;top:359.4px" width="11" height="11" viewBox="0 0 11 11"><rect x="0" y="0" width="11" height="11" fill="#fff"/><path d="M0.5,10.5 V0.5 H10.5" stroke="#808080" fill="none"/><path d="M1.5,9.5 V1.5 H9.5" stroke="#404040" fill="none"/><path d="M0.5,10.5 H10.5 V0.5" stroke="#fff" fill="none"/><path d="M2.5,5 L4.5,7.5 L8.5,2.8" stroke="#000" stroke-width="1.6" fill="none"/></svg>
<div class="a" style="left:944px;top:363.7px;width:21px;height:2px;background:#000"></div>
<div class="t" style="left:960px;top:360.9px;width:122px;text-align:right;font-size:9px">RDS presence (%)</div>
<svg class="a" style="left:930px;top:376.8px" width="11" height="11" viewBox="0 0 11 11"><rect x="0" y="0" width="11" height="11" fill="#fff"/><path d="M0.5,10.5 V0.5 H10.5" stroke="#808080" fill="none"/><path d="M1.5,9.5 V1.5 H9.5" stroke="#404040" fill="none"/><path d="M0.5,10.5 H10.5 V0.5" stroke="#fff" fill="none"/><path d="M2.5,5 L4.5,7.5 L8.5,2.8" stroke="#000" stroke-width="1.6" fill="none"/></svg>
<div class="a" style="left:944px;top:381.1px;width:21px;height:2px;background:#e020e0"></div>
<div class="t" style="left:960px;top:378.3px;width:122px;text-align:right;font-size:9px">Filtered audio level (dBr)</div>
<div class="a" style="left:924px;top:404px;width:162px;height:48px;border:1px solid #9c9a94;outline:1px solid #fff;outline-offset:-2px"></div><div class="a" style="left:928px;top:403px;width:74px;height:4px;background:#d4d0c8"></div><div class="t" style="left:929px;top:400px;font-size:9px;color:#555">Channel to display</div>
<div class="a" style="left:927px;top:415px;width:155px;height:15px;background:#fff;border:1px solid #505050;border-top-width:2px;border-left-width:2px;border-right-color:#6c6c6c;border-bottom-color:#fff;box-shadow:0 1px 0 #9c9a94"></div>
<div class="t" style="left:929px;top:419px;font-size:9px">WMMO</div>
<div class="a" style="left:1068px;top:417px;width:13px;height:12px;background:#e2e0da;border:1px solid #fff;border-right-color:#8c8a84;border-bottom-color:#8c8a84"></div><svg class="a" style="left:1071.0px;top:421.0px" width="7" height="4" viewBox="0 0 7 4"><path d="M0,0 H7 L3.5,4 Z" fill="#3a3a3a"/></svg>
<div class="a" style="left:927px;top:432px;width:91px;height:17px;background:#fff;border:1px solid #505050;border-top-width:2px;border-left-width:2px;border-right-color:#6c6c6c;border-bottom-color:#fff"></div>
<div class="a" style="left:1004px;top:434px;width:12px;height:13px;background:#e2e0da;border:1px solid #fff;border-right-color:#8c8a84;border-bottom-color:#8c8a84"></div><svg class="a" style="left:1006.5px;top:438.5px" width="7" height="4" viewBox="0 0 7 4"><path d="M0,0 H7 L3.5,4 Z" fill="#3a3a3a"/></svg>
<div class="a" style="left:1020px;top:432px;width:62px;height:17px;background:#e4e2dc;border:1px solid #fff;border-top:2px solid #5c5c5c;border-left:2px solid #5c5c5c"></div>
<div class="t" style="left:1020px;top:436.5px;width:62px;text-align:center;font-size:9px">Last hour</div>
<div class="a" style="left:91px;top:461px;width:1004px;height:230px;border-style:solid;border-width:1px;border-color:#404040 #fff #fff #404040"></div><div class="a" style="left:92px;top:462px;width:1001px;height:205px;background:#fff"></div>
<div class="a" style="left:92px;top:462px;width:99px;height:16px;background:#d4d0c8;border-top:1px solid #fff;border-left:1px solid #fff;border-right:1px solid #404040;border-bottom:1px solid #404040"></div>
<div class="t" style="left:92px;top:466px;width:99px;text-align:center;font-size:8.7px">Date</div>
<div class="a" style="left:191px;top:462px;width:98px;height:16px;background:#d4d0c8;border-top:1px solid #fff;border-left:1px solid #fff;border-right:1px solid #404040;border-bottom:1px solid #404040"></div>
<div class="t" style="left:191px;top:466px;width:98px;text-align:center;font-size:8.7px">Time</div>
<div class="a" style="left:289px;top:462px;width:98px;height:16px;background:#d4d0c8;border-top:1px solid #fff;border-left:1px solid #fff;border-right:1px solid #404040;border-bottom:1px solid #404040"></div>
<div class="t" style="left:289px;top:466px;width:98px;text-align:center;font-size:8.7px">RF level (dB&micro;V)</div>
<div class="a" style="left:387px;top:462px;width:99px;height:16px;background:#d4d0c8;border-top:1px solid #fff;border-left:1px solid #fff;border-right:1px solid #404040;border-bottom:1px solid #404040"></div>
<div class="t" style="left:387px;top:466px;width:99px;text-align:center;font-size:8.7px">RDS level (%)</div>
<div class="a" style="left:486px;top:462px;width:99px;height:16px;background:#d4d0c8;border-top:1px solid #fff;border-left:1px solid #fff;border-right:1px solid #404040;border-bottom:1px solid #404040"></div>
<div class="t" style="left:486px;top:466px;width:99px;text-align:center;font-size:8.7px">Pilot level (%)</div>
<div class="a" style="left:585px;top:462px;width:99px;height:16px;background:#d4d0c8;border-top:1px solid #fff;border-left:1px solid #fff;border-right:1px solid #404040;border-bottom:1px solid #404040"></div>
<div class="t" style="left:585px;top:466px;width:99px;text-align:center;font-size:8.7px">Total mod. level (%)</div>
<div class="a" style="left:684px;top:462px;width:99px;height:16px;background:#d4d0c8;border-top:1px solid #fff;border-left:1px solid #fff;border-right:1px solid #404040;border-bottom:1px solid #404040"></div>
<div class="t" style="left:684px;top:466px;width:99px;text-align:center;font-size:8.7px">Total mod. peak leve...</div>
<div class="a" style="left:783px;top:462px;width:97px;height:16px;background:#d4d0c8;border-top:1px solid #fff;border-left:1px solid #fff;border-right:1px solid #404040;border-bottom:1px solid #404040"></div>
<div class="t" style="left:783px;top:466px;width:97px;text-align:center;font-size:8.7px">Audio level (dBr)</div>
<div class="a" style="left:880px;top:462px;width:99px;height:16px;background:#d4d0c8;border-top:1px solid #fff;border-left:1px solid #fff;border-right:1px solid #404040;border-bottom:1px solid #404040"></div>
<div class="t" style="left:880px;top:466px;width:99px;text-align:center;font-size:8.7px">RDS Presence (%)</div>
<div class="a" style="left:979px;top:462px;width:99px;height:16px;background:#d4d0c8;border-top:1px solid #fff;border-left:1px solid #fff;border-right:1px solid #404040;border-bottom:1px solid #404040"></div>
<div class="t" style="left:979px;top:466px;width:99px;text-align:center;font-size:8.7px">Filt. audio level (dBr)</div>
<div class="a" style="left:1078px;top:462px;width:15px;height:16px;background:#d4d0c8;border-top:1px solid #fff;border-left:1px solid #fff;border-bottom:1px solid #404040"></div>
<div class="t" style="left:93.5px;top:478.1px;font-size:9.6px;color:#000">11-26-2025</div>
<div class="t" style="left:192.5px;top:478.1px;font-size:9.6px;color:#000">15:28</div>
<div class="t" style="left:289px;top:478.1px;width:95.5px;text-align:right;font-size:9.6px;color:#000">1.2</div>
<div class="t" style="left:387px;top:478.1px;width:96.5px;text-align:right;font-size:9.6px;color:#000">7.1</div>
<div class="t" style="left:486px;top:478.1px;width:96.5px;text-align:right;font-size:9.6px;color:#000">4.3</div>
<div class="t" style="left:585px;top:478.1px;width:96.5px;text-align:right;font-size:9.6px;color:#000">28</div>
<div class="t" style="left:684px;top:478.1px;width:96.5px;text-align:right;font-size:9.6px;color:#000">29</div>
<div class="t" style="left:783px;top:478.1px;width:94.5px;text-align:right;font-size:9.6px;color:#000">-33.81</div>
<div class="t" style="left:880px;top:478.1px;width:96.5px;text-align:right;font-size:9.6px;color:#000">0</div>
<div class="t" style="left:979px;top:478.1px;width:96.5px;text-align:right;font-size:9.6px;color:#000">-44</div>
<div class="a" style="left:92px;top:490.8px;width:986px;height:13px;background:#0a246a"></div>
<div class="t" style="left:93.5px;top:491.5px;font-size:9.6px;color:#fff">11-26-2025</div>
<div class="t" style="left:192.5px;top:491.5px;font-size:9.6px;color:#fff">15:27</div>
<div class="t" style="left:289px;top:491.5px;width:95.5px;text-align:right;font-size:9.6px;color:#fff">1.1</div>
<div class="t" style="left:387px;top:491.5px;width:96.5px;text-align:right;font-size:9.6px;color:#fff">7.1</div>
<div class="t" style="left:486px;top:491.5px;width:96.5px;text-align:right;font-size:9.6px;color:#fff">4.3</div>
<div class="t" style="left:585px;top:491.5px;width:96.5px;text-align:right;font-size:9.6px;color:#fff">28</div>
<div class="t" style="left:684px;top:491.5px;width:96.5px;text-align:right;font-size:9.6px;color:#fff">31</div>
<div class="t" style="left:783px;top:491.5px;width:94.5px;text-align:right;font-size:9.6px;color:#fff">-34.07</div>
<div class="t" style="left:880px;top:491.5px;width:96.5px;text-align:right;font-size:9.6px;color:#fff">0</div>
<div class="t" style="left:979px;top:491.5px;width:96.5px;text-align:right;font-size:9.6px;color:#fff">-44.11</div>
<div class="t" style="left:93.5px;top:504.9px;font-size:9.6px;color:#000">11-26-2025</div>
<div class="t" style="left:192.5px;top:504.9px;font-size:9.6px;color:#000">15:26</div>
<div class="t" style="left:289px;top:504.9px;width:95.5px;text-align:right;font-size:9.6px;color:#000">1.12</div>
<div class="t" style="left:387px;top:504.9px;width:96.5px;text-align:right;font-size:9.6px;color:#000">7.2</div>
<div class="t" style="left:486px;top:504.9px;width:96.5px;text-align:right;font-size:9.6px;color:#000">4.3</div>
<div class="t" style="left:585px;top:504.9px;width:96.5px;text-align:right;font-size:9.6px;color:#000">28</div>
<div class="t" style="left:684px;top:504.9px;width:96.5px;text-align:right;font-size:9.6px;color:#000">31</div>
<div class="t" style="left:783px;top:504.9px;width:94.5px;text-align:right;font-size:9.6px;color:#000">-34.76</div>
<div class="t" style="left:880px;top:504.9px;width:96.5px;text-align:right;font-size:9.6px;color:#000">0</div>
<div class="t" style="left:979px;top:504.9px;width:96.5px;text-align:right;font-size:9.6px;color:#000">-44.7</div>
<div class="t" style="left:93.5px;top:518.3px;font-size:9.6px;color:#000">11-26-2025</div>
<div class="t" style="left:192.5px;top:518.3px;font-size:9.6px;color:#000">15:25</div>
<div class="t" style="left:289px;top:518.3px;width:95.5px;text-align:right;font-size:9.6px;color:#000">1.1</div>
<div class="t" style="left:387px;top:518.3px;width:96.5px;text-align:right;font-size:9.6px;color:#000">7.2</div>
<div class="t" style="left:486px;top:518.3px;width:96.5px;text-align:right;font-size:9.6px;color:#000">4.1</div>
<div class="t" style="left:585px;top:518.3px;width:96.5px;text-align:right;font-size:9.6px;color:#000">27</div>
<div class="t" style="left:684px;top:518.3px;width:96.5px;text-align:right;font-size:9.6px;color:#000">29</div>
<div class="t" style="left:783px;top:518.3px;width:94.5px;text-align:right;font-size:9.6px;color:#000">-34.7</div>
<div class="t" style="left:880px;top:518.3px;width:96.5px;text-align:right;font-size:9.6px;color:#000">0</div>
<div class="t" style="left:979px;top:518.3px;width:96.5px;text-align:right;font-size:9.6px;color:#000">-44.8</div>
<div class="t" style="left:93.5px;top:531.7px;font-size:9.6px;color:#000">11-26-2025</div>
<div class="t" style="left:192.5px;top:531.7px;font-size:9.6px;color:#000">15:24</div>
<div class="t" style="left:289px;top:531.7px;width:95.5px;text-align:right;font-size:9.6px;color:#000">11.82</div>
<div class="t" style="left:387px;top:531.7px;width:96.5px;text-align:right;font-size:9.6px;color:#000">5.9</div>
<div class="t" style="left:486px;top:531.7px;width:96.5px;text-align:right;font-size:9.6px;color:#000">5.3</div>
<div class="t" style="left:585px;top:531.7px;width:96.5px;text-align:right;font-size:9.6px;color:#000">35</div>
<div class="t" style="left:684px;top:531.7px;width:96.5px;text-align:right;font-size:9.6px;color:#000">77</div>
<div class="t" style="left:783px;top:531.7px;width:94.5px;text-align:right;font-size:9.6px;color:#000">-28.24</div>
<div class="t" style="left:880px;top:531.7px;width:96.5px;text-align:right;font-size:9.6px;color:#000">0</div>
<div class="t" style="left:979px;top:531.7px;width:96.5px;text-align:right;font-size:9.6px;color:#000">-38.47</div>
<div class="t" style="left:93.5px;top:545.1px;font-size:9.6px;color:#000">11-26-2025</div>
<div class="t" style="left:192.5px;top:545.1px;font-size:9.6px;color:#000">15:23</div>
<div class="t" style="left:289px;top:545.1px;width:95.5px;text-align:right;font-size:9.6px;color:#000">47.24</div>
<div class="t" style="left:387px;top:545.1px;width:96.5px;text-align:right;font-size:9.6px;color:#000">2.5</div>
<div class="t" style="left:486px;top:545.1px;width:96.5px;text-align:right;font-size:9.6px;color:#000">9.2</div>
<div class="t" style="left:585px;top:545.1px;width:96.5px;text-align:right;font-size:9.6px;color:#000">69</div>
<div class="t" style="left:684px;top:545.1px;width:96.5px;text-align:right;font-size:9.6px;color:#000">89</div>
<div class="t" style="left:783px;top:545.1px;width:94.5px;text-align:right;font-size:9.6px;color:#000">-4.16</div>
<div class="t" style="left:880px;top:545.1px;width:96.5px;text-align:right;font-size:9.6px;color:#000">0</div>
<div class="t" style="left:979px;top:545.1px;width:96.5px;text-align:right;font-size:9.6px;color:#000">-13.92</div>
<div class="t" style="left:93.5px;top:558.5px;font-size:9.6px;color:#000">11-26-2025</div>
<div class="t" style="left:192.5px;top:558.5px;font-size:9.6px;color:#000">15:22</div>
<div class="t" style="left:289px;top:558.5px;width:95.5px;text-align:right;font-size:9.6px;color:#000">47.25</div>
<div class="t" style="left:387px;top:558.5px;width:96.5px;text-align:right;font-size:9.6px;color:#000">2.4</div>
<div class="t" style="left:486px;top:558.5px;width:96.5px;text-align:right;font-size:9.6px;color:#000">8.9</div>
<div class="t" style="left:585px;top:558.5px;width:96.5px;text-align:right;font-size:9.6px;color:#000">75</div>
<div class="t" style="left:684px;top:558.5px;width:96.5px;text-align:right;font-size:9.6px;color:#000">84</div>
<div class="t" style="left:783px;top:558.5px;width:94.5px;text-align:right;font-size:9.6px;color:#000">-3.37</div>
<div class="t" style="left:880px;top:558.5px;width:96.5px;text-align:right;font-size:9.6px;color:#000">0</div>
<div class="t" style="left:979px;top:558.5px;width:96.5px;text-align:right;font-size:9.6px;color:#000">-11.81</div>
<div class="t" style="left:93.5px;top:571.9px;font-size:9.6px;color:#000">11-26-2025</div>
<div class="t" style="left:192.5px;top:571.9px;font-size:9.6px;color:#000">15:21</div>
<div class="t" style="left:289px;top:571.9px;width:95.5px;text-align:right;font-size:9.6px;color:#000">48.11</div>
<div class="t" style="left:387px;top:571.9px;width:96.5px;text-align:right;font-size:9.6px;color:#000">2.4</div>
<div class="t" style="left:486px;top:571.9px;width:96.5px;text-align:right;font-size:9.6px;color:#000">8.8</div>
<div class="t" style="left:585px;top:571.9px;width:96.5px;text-align:right;font-size:9.6px;color:#000">64</div>
<div class="t" style="left:684px;top:571.9px;width:96.5px;text-align:right;font-size:9.6px;color:#000">87</div>
<div class="t" style="left:783px;top:571.9px;width:94.5px;text-align:right;font-size:9.6px;color:#000">-4.97</div>
<div class="t" style="left:880px;top:571.9px;width:96.5px;text-align:right;font-size:9.6px;color:#000">0</div>
<div class="t" style="left:979px;top:571.9px;width:96.5px;text-align:right;font-size:9.6px;color:#000">-14.25</div>
<div class="t" style="left:93.5px;top:585.3px;font-size:9.6px;color:#000">11-26-2025</div>
<div class="t" style="left:192.5px;top:585.3px;font-size:9.6px;color:#000">15:20</div>
<div class="t" style="left:289px;top:585.3px;width:95.5px;text-align:right;font-size:9.6px;color:#000">48.02</div>
<div class="t" style="left:387px;top:585.3px;width:96.5px;text-align:right;font-size:9.6px;color:#000">2.3</div>
<div class="t" style="left:486px;top:585.3px;width:96.5px;text-align:right;font-size:9.6px;color:#000">8.7</div>
<div class="t" style="left:585px;top:585.3px;width:96.5px;text-align:right;font-size:9.6px;color:#000">69</div>
<div class="t" style="left:684px;top:585.3px;width:96.5px;text-align:right;font-size:9.6px;color:#000">87</div>
<div class="t" style="left:783px;top:585.3px;width:94.5px;text-align:right;font-size:9.6px;color:#000">-5.04</div>
<div class="t" style="left:880px;top:585.3px;width:96.5px;text-align:right;font-size:9.6px;color:#000">0</div>
<div class="t" style="left:979px;top:585.3px;width:96.5px;text-align:right;font-size:9.6px;color:#000">-16.11</div>
<div class="t" style="left:93.5px;top:598.7px;font-size:9.6px;color:#000">11-26-2025</div>
<div class="t" style="left:192.5px;top:598.7px;font-size:9.6px;color:#000">15:19</div>
<div class="t" style="left:289px;top:598.7px;width:95.5px;text-align:right;font-size:9.6px;color:#000">47.34</div>
<div class="t" style="left:387px;top:598.7px;width:96.5px;text-align:right;font-size:9.6px;color:#000">2.4</div>
<div class="t" style="left:486px;top:598.7px;width:96.5px;text-align:right;font-size:9.6px;color:#000">8.5</div>
<div class="t" style="left:585px;top:598.7px;width:96.5px;text-align:right;font-size:9.6px;color:#000">75</div>
<div class="t" style="left:684px;top:598.7px;width:96.5px;text-align:right;font-size:9.6px;color:#000">84</div>
<div class="t" style="left:783px;top:598.7px;width:94.5px;text-align:right;font-size:9.6px;color:#000">-4.54</div>
<div class="t" style="left:880px;top:598.7px;width:96.5px;text-align:right;font-size:9.6px;color:#000">0</div>
<div class="t" style="left:979px;top:598.7px;width:96.5px;text-align:right;font-size:9.6px;color:#000">-12.94</div>
<div class="t" style="left:93.5px;top:612.1px;font-size:9.6px;color:#000">11-26-2025</div>
<div class="t" style="left:192.5px;top:612.1px;font-size:9.6px;color:#000">15:18</div>
<div class="t" style="left:289px;top:612.1px;width:95.5px;text-align:right;font-size:9.6px;color:#000">47.41</div>
<div class="t" style="left:387px;top:612.1px;width:96.5px;text-align:right;font-size:9.6px;color:#000">2.4</div>
<div class="t" style="left:486px;top:612.1px;width:96.5px;text-align:right;font-size:9.6px;color:#000">8.7</div>
<div class="t" style="left:585px;top:612.1px;width:96.5px;text-align:right;font-size:9.6px;color:#000">77</div>
<div class="t" style="left:684px;top:612.1px;width:96.5px;text-align:right;font-size:9.6px;color:#000">85</div>
<div class="t" style="left:783px;top:612.1px;width:94.5px;text-align:right;font-size:9.6px;color:#000">-3.22</div>
<div class="t" style="left:880px;top:612.1px;width:96.5px;text-align:right;font-size:9.6px;color:#000">0</div>
<div class="t" style="left:979px;top:612.1px;width:96.5px;text-align:right;font-size:9.6px;color:#000">-11.38</div>
<div class="t" style="left:93.5px;top:625.5px;font-size:9.6px;color:#000">11-26-2025</div>
<div class="t" style="left:192.5px;top:625.5px;font-size:9.6px;color:#000">15:17</div>
<div class="t" style="left:289px;top:625.5px;width:95.5px;text-align:right;font-size:9.6px;color:#000">48.14</div>
<div class="t" style="left:387px;top:625.5px;width:96.5px;text-align:right;font-size:9.6px;color:#000">2.3</div>
<div class="t" style="left:486px;top:625.5px;width:96.5px;text-align:right;font-size:9.6px;color:#000">8.5</div>
<div class="t" style="left:585px;top:625.5px;width:96.5px;text-align:right;font-size:9.6px;color:#000">77</div>
<div class="t" style="left:684px;top:625.5px;width:96.5px;text-align:right;font-size:9.6px;color:#000">84</div>
<div class="t" style="left:783px;top:625.5px;width:94.5px;text-align:right;font-size:9.6px;color:#000">-3.98</div>
<div class="t" style="left:880px;top:625.5px;width:96.5px;text-align:right;font-size:9.6px;color:#000">0</div>
<div class="t" style="left:979px;top:625.5px;width:96.5px;text-align:right;font-size:9.6px;color:#000">-12.48</div>
<div class="t" style="left:93.5px;top:638.9px;font-size:9.6px;color:#000">11-26-2025</div>
<div class="t" style="left:192.5px;top:638.9px;font-size:9.6px;color:#000">15:16</div>
<div class="t" style="left:289px;top:638.9px;width:95.5px;text-align:right;font-size:9.6px;color:#000">47.57</div>
<div class="t" style="left:387px;top:638.9px;width:96.5px;text-align:right;font-size:9.6px;color:#000">2.4</div>
<div class="t" style="left:486px;top:638.9px;width:96.5px;text-align:right;font-size:9.6px;color:#000">8.5</div>
<div class="t" style="left:585px;top:638.9px;width:96.5px;text-align:right;font-size:9.6px;color:#000">73</div>
<div class="t" style="left:684px;top:638.9px;width:96.5px;text-align:right;font-size:9.6px;color:#000">85</div>
<div class="t" style="left:783px;top:638.9px;width:94.5px;text-align:right;font-size:9.6px;color:#000">-4.7</div>
<div class="t" style="left:880px;top:638.9px;width:96.5px;text-align:right;font-size:9.6px;color:#000">0</div>
<div class="t" style="left:979px;top:638.9px;width:96.5px;text-align:right;font-size:9.6px;color:#000">-12.84</div>
<div class="t" style="left:93.5px;top:652.3px;font-size:9.6px;color:#000">11-26-2025</div>
<div class="t" style="left:192.5px;top:652.3px;font-size:9.6px;color:#000">15:15</div>
<div class="t" style="left:289px;top:652.3px;width:95.5px;text-align:right;font-size:9.6px;color:#000">48.25</div>
<div class="t" style="left:387px;top:652.3px;width:96.5px;text-align:right;font-size:9.6px;color:#000">2.3</div>
<div class="t" style="left:486px;top:652.3px;width:96.5px;text-align:right;font-size:9.6px;color:#000">8.5</div>
<div class="t" style="left:585px;top:652.3px;width:96.5px;text-align:right;font-size:9.6px;color:#000">65</div>
<div class="t" style="left:684px;top:652.3px;width:96.5px;text-align:right;font-size:9.6px;color:#000">84</div>
<div class="t" style="left:783px;top:652.3px;width:94.5px;text-align:right;font-size:9.6px;color:#000">-6.31</div>
<div class="t" style="left:880px;top:652.3px;width:96.5px;text-align:right;font-size:9.6px;color:#000">0</div>
<div class="t" style="left:979px;top:652.3px;width:96.5px;text-align:right;font-size:9.6px;color:#000">-15.08</div>
<div class="a" style="left:92px;top:490.2px;width:986px;height:1px;background:#a8a8a8"></div>
<div class="a" style="left:92px;top:503.6px;width:986px;height:1px;background:#a8a8a8"></div>
<div class="a" style="left:92px;top:517.0px;width:986px;height:1px;background:#a8a8a8"></div>
<div class="a" style="left:92px;top:530.4px;width:986px;height:1px;background:#a8a8a8"></div>
<div class="a" style="left:92px;top:543.8px;width:986px;height:1px;background:#a8a8a8"></div>
<div class="a" style="left:92px;top:557.2px;width:986px;height:1px;background:#a8a8a8"></div>
<div class="a" style="left:92px;top:570.6px;width:986px;height:1px;background:#a8a8a8"></div>
<div class="a" style="left:92px;top:584.0px;width:986px;height:1px;background:#a8a8a8"></div>
<div class="a" style="left:92px;top:597.4px;width:986px;height:1px;background:#a8a8a8"></div>
<div class="a" style="left:92px;top:610.8px;width:986px;height:1px;background:#a8a8a8"></div>
<div class="a" style="left:92px;top:624.2px;width:986px;height:1px;background:#a8a8a8"></div>
<div class="a" style="left:92px;top:637.6px;width:986px;height:1px;background:#a8a8a8"></div>
<div class="a" style="left:92px;top:651.0px;width:986px;height:1px;background:#a8a8a8"></div>
<div class="a" style="left:92px;top:664.4px;width:986px;height:1px;background:#a8a8a8"></div>
<div class="a" style="left:190px;top:478px;width:1px;height:189px;background:#a0a0a0"></div>
<div class="a" style="left:288px;top:478px;width:1px;height:189px;background:#a0a0a0"></div>
<div class="a" style="left:386px;top:478px;width:1px;height:189px;background:#a0a0a0"></div>
<div class="a" style="left:485px;top:478px;width:1px;height:189px;background:#a0a0a0"></div>
<div class="a" style="left:584px;top:478px;width:1px;height:189px;background:#a0a0a0"></div>
<div class="a" style="left:683px;top:478px;width:1px;height:189px;background:#a0a0a0"></div>
<div class="a" style="left:782px;top:478px;width:1px;height:189px;background:#a0a0a0"></div>
<div class="a" style="left:879px;top:478px;width:1px;height:189px;background:#a0a0a0"></div>
<div class="a" style="left:978px;top:478px;width:1px;height:189px;background:#a0a0a0"></div>
<div class="a" style="left:1077px;top:478px;width:1px;height:189px;background:#a0a0a0"></div>
<div class="a" style="left:1078px;top:478px;width:15px;height:189px;background:#ebe9e4"></div>
<div class="a raised" style="left:1078px;top:478.5px;width:14px;height:13px;background:#d4d0c8;box-shadow:inset -1px -1px 0 #404040"></div><svg class="a" style="left:1081.5px;top:483.0px" width="7" height="4" viewBox="0 0 7 4"><path d="M0,4 H7 L3.5,0 Z" fill="#000"/></svg>
<div class="a raised" style="left:1078px;top:491.5px;width:14px;height:38.5px;background:#d4d0c8;box-shadow:inset -1px -1px 0 #404040"></div>
<div class="a raised" style="left:1078px;top:654px;width:14px;height:13px;background:#d4d0c8;box-shadow:inset -1px -1px 0 #404040"></div><svg class="a" style="left:1081.5px;top:658.5px" width="7" height="4" viewBox="0 0 7 4"><path d="M0,0 H7 L3.5,4 Z" fill="#000"/></svg>
<div class="a raised" style="left:999px;top:670px;width:94px;height:18px;background:#d4d0c8;box-shadow:inset -1px -1px 0 #404040"></div>
<div class="t" style="left:1013px;top:673.5px;font-size:9px;color:#000;">Export to CSV...</div>
<div class="a sunk" style="left:4px;top:693px;width:100px;height:16px"></div>
<div class="t" style="left:7px;top:696.5px;font-size:9px;color:#000;">Admin@192.168.1.188</div>
<div class="a sunk" style="left:106px;top:693px;width:333px;height:16px"></div>
</body></html>
